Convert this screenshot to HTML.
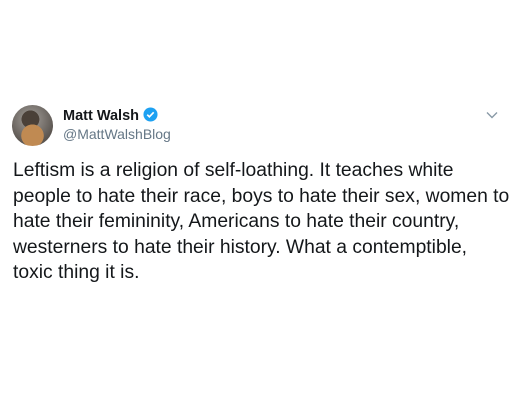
<html><head><style>
body{margin:0;width:513px;height:411px;background:#fff;font-family:"Liberation Sans",sans-serif;position:relative;overflow:hidden}
.av{position:absolute;left:12px;top:105px;width:41px;height:41px;border-radius:50%;background:radial-gradient(circle at 50% 75%,#c08a52 0 30%,transparent 31%),radial-gradient(circle at 45% 35%,#4a4038 0 25%,#8a8580 26%,#5b5550 70%)}
.n{position:absolute;left:63px;top:107px;font-weight:bold;font-size:14.5px;color:#14171a}
.h{position:absolute;left:63px;top:126px;font-size:14px;color:#657786}
.t{position:absolute;left:13px;top:158px;white-space:nowrap;font-size:19.3px;line-height:25.5px;color:#14171a}
</style></head><body>
<div class="av"></div>
<div class="n">Matt Walsh <svg width="15" height="15" viewBox="0 0 16 16" style="vertical-align:-2px"><circle cx="8" cy="8" r="7.5" fill="#1da1f2"/><path d="M4.5 8.2l2.3 2.3 4.6-4.8" stroke="#fff" stroke-width="1.8" fill="none"/></svg></div>
<div class="h">@MattWalshBlog</div>
<svg style="position:absolute;left:486px;top:111px" width="12" height="8" viewBox="0 0 12 8"><path d="M1 1.5l5 5 5-5" stroke="#8899a6" stroke-width="1.4" fill="none"/></svg>
<div class="t">Leftism is a religion of self-loathing. It teaches white<br>people to hate their race, boys to hate their sex, women to<br>hate their femininity, Americans to hate their country,<br>westerners to hate their history. What a contemptible,<br>toxic thing it is.</div>
</body></html>
